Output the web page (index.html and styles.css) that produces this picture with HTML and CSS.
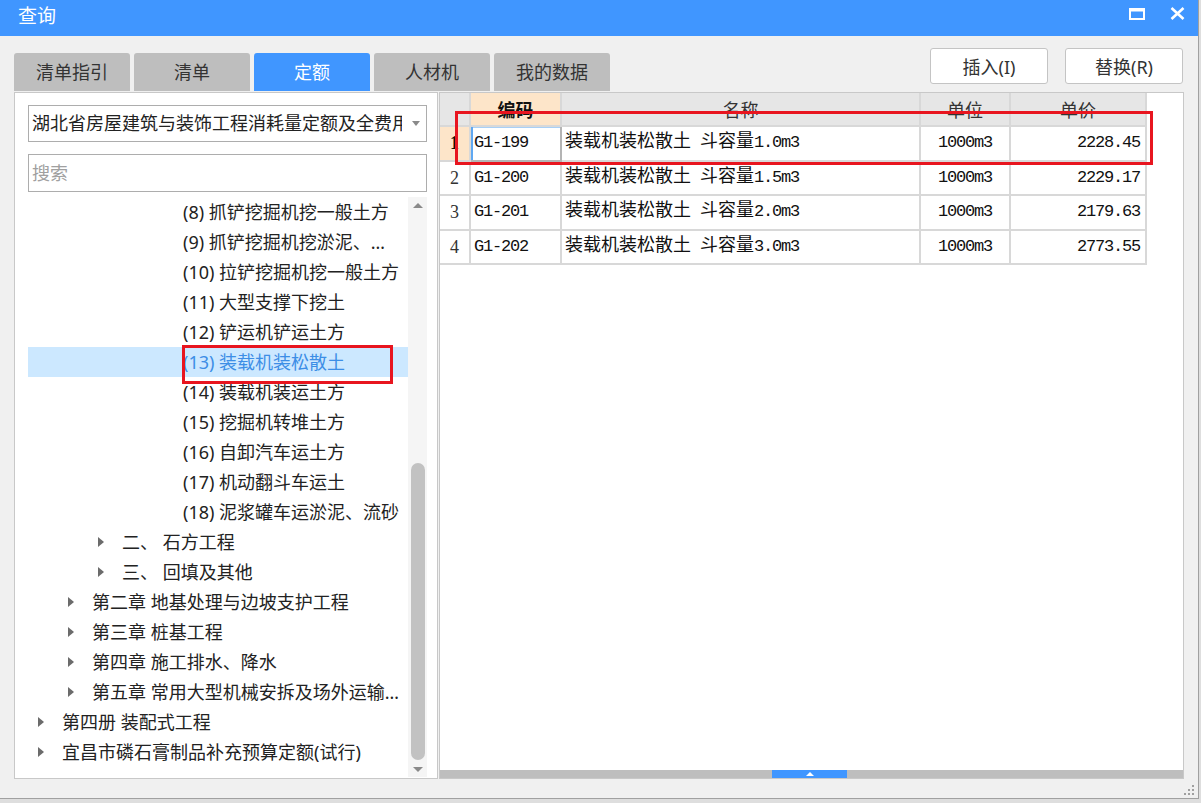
FILE: index.html
```html
<!DOCTYPE html>
<html lang="zh-CN">
<head>
<meta charset="utf-8">
<title>查询</title>
<link rel="stylesheet" href="styles.css">
</head>
<body>
<div class="dialog">
  <div class="titlebar">
    <span class="title">查询</span>
    <div class="win-btns">
      <svg class="ico" width="16" height="12" viewBox="0 0 16 12"><rect x="1" y="2" width="14" height="9" fill="none" stroke="#fff" stroke-width="2"/><rect x="0" y="0" width="16" height="3.5" fill="#fff"/></svg>
      <svg class="ico" width="15" height="13" viewBox="0 0 15 13"><path d="M1.5 1 L13.5 12 M13.5 1 L1.5 12" stroke="#fff" stroke-width="2.6" fill="none"/></svg>
    </div>
  </div>

  <div class="toolbar">
    <div class="tabs">
      <div class="tab">清单指引</div>
      <div class="tab">清单</div>
      <div class="tab active">定额</div>
      <div class="tab">人材机</div>
      <div class="tab">我的数据</div>
    </div>
    <div class="actions">
      <button class="btn">插入(I)</button>
      <button class="btn">替换(R)</button>
    </div>
  </div>

  <div class="main">
    <div class="left">
      <div class="select">
        <span class="select-text">湖北省房屋建筑与装饰工程消耗量定额及全费用基价表(2018)</span>
        <span class="caret"></span>
      </div>
      <div class="search">搜索</div>
      <div class="tree-wrap">
        <ul class="tree">
          <li class="leaf">(8) 抓铲挖掘机挖一般土方</li>
          <li class="leaf">(9) 抓铲挖掘机挖淤泥、…</li>
          <li class="leaf">(10) 拉铲挖掘机挖一般土方</li>
          <li class="leaf">(11) 大型支撑下挖土</li>
          <li class="leaf">(12) 铲运机铲运土方</li>
          <li class="leaf sel">(13) 装载机装松散土</li>
          <li class="leaf">(14) 装载机装运土方</li>
          <li class="leaf">(15) 挖掘机转堆土方</li>
          <li class="leaf">(16) 自卸汽车运土方</li>
          <li class="leaf">(17) 机动翻斗车运土</li>
          <li class="leaf">(18) 泥浆罐车运淤泥、流砂</li>
          <li class="l3"><span class="arrow"></span>二、 石方工程</li>
          <li class="l3"><span class="arrow"></span>三、 回填及其他</li>
          <li class="l2"><span class="arrow"></span>第二章 地基处理与边坡支护工程</li>
          <li class="l2"><span class="arrow"></span>第三章 桩基工程</li>
          <li class="l2"><span class="arrow"></span>第四章 施工排水、降水</li>
          <li class="l2"><span class="arrow"></span>第五章 常用大型机械安拆及场外运输…</li>
          <li class="l1"><span class="arrow"></span>第四册 装配式工程</li>
          <li class="l1"><span class="arrow"></span>宜昌市磷石膏制品补充预算定额(试行)</li>
        </ul>
        <div class="vscroll">
          <span class="sb-up"></span>
          <div class="sb-track"><div class="sb-thumb"></div></div>
          <span class="sb-down"></span>
        </div>
      </div>
    </div>

    <div class="right">
      <div class="grid">
        <div class="row head">
          <div class="cell rn"></div>
          <div class="cell hl strong">编码</div>
          <div class="cell">名称</div>
          <div class="cell">单位</div>
          <div class="cell">单价</div>
        </div>
        <div class="row">
          <div class="cell rn cur">1</div>
          <div class="cell code focus">G1-199</div>
          <div class="cell name"><span class="cj">装载机装松散土 斗容量</span>1.0m3</div>
          <div class="cell unit">1000m3</div>
          <div class="cell price">2228.45</div>
        </div>
        <div class="row">
          <div class="cell rn">2</div>
          <div class="cell code">G1-200</div>
          <div class="cell name"><span class="cj">装载机装松散土 斗容量</span>1.5m3</div>
          <div class="cell unit">1000m3</div>
          <div class="cell price">2229.17</div>
        </div>
        <div class="row">
          <div class="cell rn">3</div>
          <div class="cell code">G1-201</div>
          <div class="cell name"><span class="cj">装载机装松散土 斗容量</span>2.0m3</div>
          <div class="cell unit">1000m3</div>
          <div class="cell price">2179.63</div>
        </div>
        <div class="row">
          <div class="cell rn">4</div>
          <div class="cell code">G1-202</div>
          <div class="cell name"><span class="cj">装载机装松散土 斗容量</span>3.0m3</div>
          <div class="cell unit">1000m3</div>
          <div class="cell price">2773.55</div>
        </div>
      </div>
      <div class="hbar"><div class="handle"></div></div>
    </div>
  </div>

  <div class="statusbar">
    <svg class="grip" width="12" height="12" viewBox="0 0 12 12" fill="#a0a0a0">
      <rect x="9" y="1" width="2" height="2"/>
      <rect x="5" y="5" width="2" height="2"/><rect x="9" y="5" width="2" height="2"/>
      <rect x="1" y="9" width="2" height="2"/><rect x="5" y="9" width="2" height="2"/><rect x="9" y="9" width="2" height="2"/>
    </svg>
  </div>

  <div class="mark mark-tree"></div>
  <div class="mark mark-row"></div>
</div>
</body>
</html>
```

FILE: styles.css
```css
* { box-sizing: border-box; }
html, body { margin: 0; padding: 0; }
body {
  width: 1201px;
  height: 803px;
  overflow: hidden;
  background: #dedede;
  font-family: "Noto Sans", "Noto Sans CJK SC", sans-serif;
  color: #222;
}

.dialog {
  position: relative;
  width: 1199px;
  height: 799px;
  background: #f0f0f0;
  border-right: 1px solid #a0a0a0;
  border-bottom: 1px solid #a0a0a0;
  display: flex;
  flex-direction: column;
}

/* title bar */
.titlebar {
  flex: none;
  height: 36px;
  background: #4096ff;
  color: #fff;
  display: flex;
  align-items: center;
  padding: 0 13px 0 18px;
}
.title { font-size: 19px; line-height: 1; margin-bottom: 3px; }
.win-btns {
  margin-left: auto;
  display: flex;
  align-items: center;
  gap: 25px;
  margin-bottom: 9px;
}
.ico { display: block; }

/* toolbar: tabs + buttons */
.toolbar {
  flex: none;
  height: 56px;
  display: flex;
  padding: 0 15px 0 14px;
}
.tabs {
  display: flex;
  gap: 4px;
  align-self: flex-end;
  margin-bottom: 1px;
}
.tab {
  width: 116px;
  height: 38px;
  background: #bebebe;
  border-radius: 3px 3px 0 0;
  font-size: 18px;
  line-height: 38px;
  text-align: center;
  color: #333;
}
.tab.active { background: #4096ff; color: #fff; }
.actions {
  margin-left: auto;
  display: flex;
  gap: 17px;
  padding-top: 12px;
}
.btn {
  width: 118px;
  height: 36px;
  padding: 0;
  background: #fff;
  border: 1px solid #c4c4c4;
  border-radius: 3px;
  font-family: inherit;
  font-size: 18px;
  color: #333;
}

/* main area */
.main {
  flex: none;
  height: 687px;
  display: flex;
  gap: 1px;
  padding: 0 14px;
}
.left {
  width: 424px;
  background: #fff;
  border: 1px solid #c8c8c8;
  padding: 12px 10px 0 13px;
  display: flex;
  flex-direction: column;
}
.select {
  height: 37px;
  border: 1px solid #adadad;
  display: flex;
  align-items: center;
  padding: 0 0 0 3px;
}
.select-text {
  width: 370px;
  overflow: hidden;
  white-space: nowrap;
  font-size: 18px;
  line-height: 35px;
  color: #222;
}
.caret {
  margin-left: 10px;
  width: 0;
  height: 0;
  border-top: 5px solid #8a8a8a;
  border-left: 4px solid transparent;
  border-right: 4px solid transparent;
}
.search {
  margin-top: 12px;
  height: 38px;
  border: 1px solid #adadad;
  padding-left: 3px;
  font-size: 18px;
  line-height: 36px;
  color: #a0a0a0;
}

.tree-wrap {
  margin-top: 5px;
  height: 580px;
  display: flex;
}
.tree {
  list-style: none;
  margin: 0;
  padding: 0;
  width: 380px;
  flex: none;
}
.tree li {
  height: 30px;
  line-height: 31px;
  font-size: 18px;
  white-space: nowrap;
  overflow: hidden;
  display: flex;
  align-items: center;
  color: #222;
}
.tree .leaf { padding-left: 155px; }
.tree .l3 { padding-left: 70px; }
.tree .l2 { padding-left: 40px; }
.tree .l1 { padding-left: 10px; }
.tree .sel { background: #cce8ff; color: #3d8ee6; }
.arrow { flex: none; width: 24px; display: flex; align-items: center; }
.arrow::before {
  content: "";
  width: 0;
  height: 0;
  border-left: 6px solid #6b6b6b;
  border-top: 5px solid transparent;
  border-bottom: 5px solid transparent;
}

.vscroll {
  width: 19px;
  flex: none;
  background: #f5f5f5;
  display: flex;
  flex-direction: column;
  align-items: center;
}
.sb-up, .sb-down {
  flex: none;
  height: 16px;
  display: flex;
  align-items: center;
  justify-content: center;
}
.sb-up::before {
  content: "";
  border-bottom: 5px solid #8a8a8a;
  border-left: 5px solid transparent;
  border-right: 5px solid transparent;
}
.sb-down::before {
  content: "";
  border-top: 5px solid #8a8a8a;
  border-left: 5px solid transparent;
  border-right: 5px solid transparent;
}
.sb-track { flex: 1; width: 100%; display: flex; justify-content: center; }
.sb-thumb {
  margin-top: 250px;
  width: 14px;
  height: 297px;
  border-radius: 7px;
  background: #c2c2c2;
}

/* right: results grid */
.right {
  flex: 1;
  background: #fff;
  border: 1px solid #c8c8c8;
  display: flex;
  flex-direction: column;
}
.grid { width: 707px; }
.row {
  display: grid;
  grid-template-columns: 31px 91px 359px 90px 136px;
  height: 34.5px;
}
.row.head { height: 34px; }
.cell {
  border-right: 2px solid #d8d8d8;
  border-bottom: 2px solid #d8d8d8;
  padding: 0 3px;
  line-height: 32px;
  white-space: nowrap;
  overflow: hidden;
  font-family: "Liberation Mono", "Noto Sans CJK SC", monospace;
  font-size: 17px;
  letter-spacing: -1.2px;
  color: #111;
}
.cj {
  font-family: "Noto Sans CJK SC", sans-serif;
  font-size: 18px;
  line-height: 18px;
  letter-spacing: 0;
  word-spacing: 5px;
}
.head .cell {
  background: #e6e6e6;
  text-align: center;
  font-family: "Noto Sans CJK SC", sans-serif;
  font-size: 18px;
  letter-spacing: 0;
  color: #333;
}
.head .cell.hl { background: #fde5c9; }
.head .cell.strong { font-weight: bold; color: #111; }
.cell.rn {
  text-align: center;
  padding: 0;
  font-family: "Liberation Serif", serif;
  font-size: 18px;
  letter-spacing: 0;
  color: #333;
}
.cell.rn.cur { background: #fde5c9; font-weight: bold; color: #111; }
.cell.unit { text-align: center; }
.cell.price { text-align: right; padding-right: 5px; }
.cell.focus {
  box-shadow: inset 2px 0 0 #5fa8f2, inset 0 1px 0 #a9d0f6;
  border-right-color: #b4b4b4;
  border-bottom-color: #b4b4b4;
}

.hbar {
  margin-top: auto;
  height: 8px;
  background: #bebebe;
  display: flex;
}
.handle {
  margin-left: 332px;
  width: 75px;
  height: 8px;
  background: #4096ff;
  display: flex;
  align-items: center;
  justify-content: center;
}
.handle::before {
  content: "";
  border-bottom: 4px solid #fff;
  border-left: 4px solid transparent;
  border-right: 4px solid transparent;
}

.statusbar {
  flex: 1;
  display: flex;
  justify-content: flex-end;
  align-items: flex-end;
  padding: 0 3px 2px 0;
}
.grip { display: block; }

/* red annotation boxes drawn over the screenshot */
.mark {
  position: absolute;
  border: 3px solid #e8151f;
  pointer-events: none;
}
.mark-tree { left: 182px; top: 345px; width: 211px; height: 39px; }
.mark-row { left: 455px; top: 111px; width: 698px; height: 54px; }
```
